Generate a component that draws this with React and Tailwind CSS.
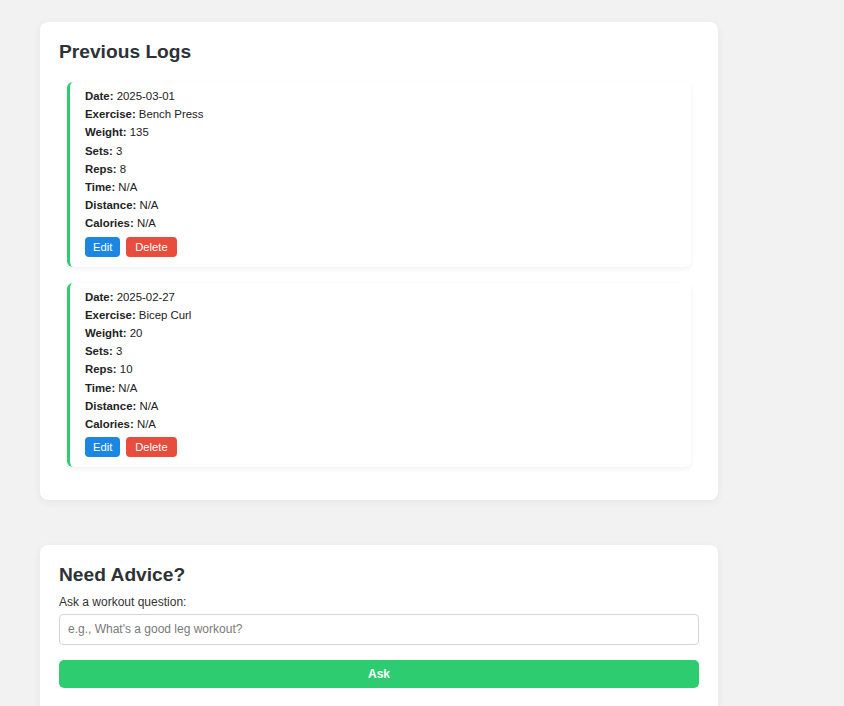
import React from "react";

const logs = [
  { date: "2025-03-01", exercise: "Bench Press", weight: "135", sets: "3", reps: "8" },
  { date: "2025-02-27", exercise: "Bicep Curl", weight: "20", sets: "3", reps: "10" },
];

function Field({ label, value }) {
  return (
    <p className="m-0 leading-[18.2px]">
      <strong className="font-bold">{label}:</strong> {value}
    </p>
  );
}

function LogCard({ log }) {
  return (
    <li className="mx-[8px] rounded-[6px] border-l-[3px] border-[#2ecc71] bg-white pl-[15px] pt-[5px] pb-[10px] shadow-[0_2px_5px_rgba(0,0,0,0.06)] text-[11.4px] text-[#222]">
      <Field label="Date" value={log.date} />
      <Field label="Exercise" value={log.exercise} />
      <Field label="Weight" value={log.weight} />
      <Field label="Sets" value={log.sets} />
      <Field label="Reps" value={log.reps} />
      <Field label="Time" value="N/A" />
      <Field label="Distance" value="N/A" />
      <Field label="Calories" value="N/A" />
      <div className="mt-[4px] flex gap-[6px]">
        <button className="h-[20px] rounded-[4px] bg-[#1c87e2] px-[8px] text-[11.2px] leading-[20px] text-white">
          Edit
        </button>
        <button className="h-[20px] rounded-[4px] bg-[#e74c3c] px-[9px] text-[11.2px] leading-[20px] text-white">
          Delete
        </button>
      </div>
    </li>
  );
}

export default function App() {
  return (
    <div
      className="min-h-[706px] bg-[#f2f2f2] pt-[22px]"
      style={{ fontFamily: '"Liberation Sans", Arial, sans-serif' }}
    >
      <div className="ml-[40px] w-[678px]">
        <section className="rounded-[8px] bg-white px-[19px] pt-[18px] pb-[33px] shadow-[0_2px_8px_rgba(0,0,0,0.06)]">
          <h2 className="m-0 text-[19.2px] font-bold leading-[23px] text-[#2c3236]">Previous Logs</h2>
          <ul className="mt-[19px] flex list-none flex-col gap-[16px] p-0">
            {logs.map((l) => (
              <LogCard key={l.date} log={l} />
            ))}
          </ul>
        </section>

        <section className="mt-[45px] rounded-t-[8px] bg-white px-[19px] pt-[18px] pb-[20px] shadow-[0_2px_8px_rgba(0,0,0,0.06)]">
          <h2 className="m-0 text-[19.2px] font-bold leading-[23px] text-[#2c3236]">Need Advice?</h2>
          <label className="mt-[9px] block text-[12px] leading-[14.4px] text-[#333]">
            Ask a workout question:
          </label>
          <input
            type="text"
            placeholder="e.g., What's a good leg workout?"
            className="mt-[4px] box-border block h-[31px] w-full rounded-[4px] border border-[#d4d4d4] bg-white px-[8px] text-[12px] text-[#333] placeholder:text-[#7a7a7a] outline-none"
          />
          <button className="mt-[15px] block h-[28px] w-full rounded-[5px] bg-[#2ecc71] text-[12px] font-bold text-white">
            Ask
          </button>
        </section>
      </div>
    </div>
  );
}
